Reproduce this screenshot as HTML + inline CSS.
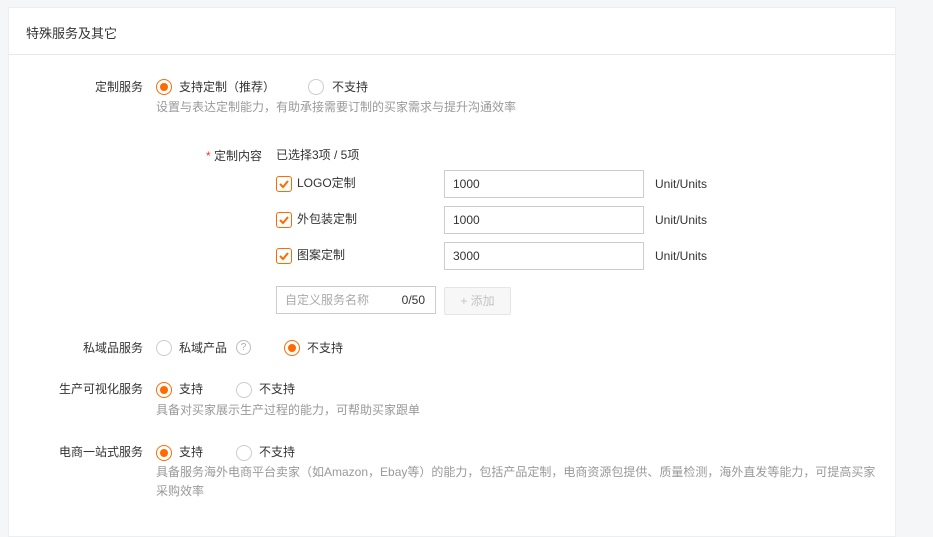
<!DOCTYPE html>
<html><head><meta charset="utf-8"><style>
*{margin:0;padding:0;box-sizing:border-box}
body{width:933px;height:524px;background:#f5f6f8;font-family:"Liberation Sans","Noto Sans CJK SC",sans-serif;font-size:12px;color:#333;position:relative;overflow:hidden}
.card{position:absolute;left:8px;top:7px;width:888px;height:530px;background:#fff;border:1px solid #eceef0}
.hd{position:absolute;left:0;top:0;width:100%;height:47px;border-bottom:1px solid #e8e8e8}
.hd span{position:absolute;left:17px;top:15px;font-size:13px;color:#333}
.a{position:absolute;white-space:nowrap;line-height:16px}
.lbl{text-align:right;width:140px;left:3px;color:#333}
.tip{color:#999}
.r{position:absolute;width:16px;height:16px;border:1px solid #ccc;border-radius:50%;background:#fff}
.r.on{border-color:#ff6a00}
.r.on::after{content:"";position:absolute;left:3px;top:3px;width:8px;height:8px;border-radius:50%;background:#ff6a00}
.cb{position:absolute;width:16px;height:16px;border:1px solid #ff6a00;border-radius:3px;background:#fff}
.cb svg{position:absolute;left:1px;top:1px}
.in{position:absolute;width:200px;height:28px;border:1px solid #ccc;padding-left:8px;line-height:26px;color:#333}
</style></head><body>
<div class="card">
<div class="hd"><span>特殊服务及其它</span></div>
</div>
<div class="a lbl" style="top:79px">定制服务</div>
<div class="r on" style="left:156px;top:79px"></div>
<div class="a" style="left:179px;top:79px">支持定制（推荐）</div>
<div class="r" style="left:308px;top:79px"></div>
<div class="a" style="left:332px;top:79px">不支持</div>
<div class="a tip" style="left:156px;top:99px">设置与表达定制能力，有助承接需要订制的买家需求与提升沟通效率</div>

<div class="a" style="left:206px;top:148px"><span style="color:#f33">*</span> 定制内容</div>
<div class="a" style="left:276px;top:147px">已选择3项 / 5项</div>

<div class="cb" style="left:276px;top:176px"><svg width="12" height="12" viewBox="0 0 12 12"><path d="M2 6l3 3 5-6" fill="none" stroke="#ff6a00" stroke-width="2"/></svg></div>
<div class="a" style="left:297px;top:175px">LOGO定制</div>
<div class="in" style="left:444px;top:170px">1000</div>
<div class="a" style="left:655px;top:176px">Unit/Units</div>

<div class="cb" style="left:276px;top:212px"><svg width="12" height="12" viewBox="0 0 12 12"><path d="M2 6l3 3 5-6" fill="none" stroke="#ff6a00" stroke-width="2"/></svg></div>
<div class="a" style="left:297px;top:211px">外包装定制</div>
<div class="in" style="left:444px;top:206px">1000</div>
<div class="a" style="left:655px;top:212px">Unit/Units</div>

<div class="cb" style="left:276px;top:248px"><svg width="12" height="12" viewBox="0 0 12 12"><path d="M2 6l3 3 5-6" fill="none" stroke="#ff6a00" stroke-width="2"/></svg></div>
<div class="a" style="left:297px;top:247px">图案定制</div>
<div class="in" style="left:444px;top:242px">3000</div>
<div class="a" style="left:655px;top:248px">Unit/Units</div>

<div class="in" style="left:276px;top:286px;width:160px;color:#aaa">自定义服务名称<span style="position:absolute;right:10px;color:#333">0/50</span></div>
<div class="a" style="left:444px;top:287px;width:67px;height:28px;border:1px solid #e5e5e5;border-radius:2px;background:#f7f7f7;color:#c4c4c4;text-align:center;line-height:26px">+ 添加</div>

<div class="a lbl" style="top:340px">私域品服务</div>
<div class="r" style="left:156px;top:340px"></div>
<div class="a" style="left:179px;top:340px">私域产品</div>
<div class="a" style="left:236px;top:340px;width:15px;height:15px;border:1px solid #bbb;border-radius:50%;color:#aaa;font-size:10px;text-align:center;line-height:13px">?</div>
<div class="r on" style="left:284px;top:340px"></div>
<div class="a" style="left:307px;top:340px">不支持</div>

<div class="a lbl" style="top:381px">生产可视化服务</div>
<div class="r on" style="left:156px;top:382px"></div>
<div class="a" style="left:179px;top:381px">支持</div>
<div class="r" style="left:236px;top:382px"></div>
<div class="a" style="left:259px;top:381px">不支持</div>
<div class="a tip" style="left:156px;top:402px">具备对买家展示生产过程的能力，可帮助买家跟单</div>

<div class="a lbl" style="top:444px">电商一站式服务</div>
<div class="r on" style="left:156px;top:445px"></div>
<div class="a" style="left:179px;top:444px">支持</div>
<div class="r" style="left:236px;top:445px"></div>
<div class="a" style="left:259px;top:444px">不支持</div>
<div class="a tip" style="left:156px;top:464px">具备服务海外电商平台卖家（如Amazon，Ebay等）的能力，包括产品定制，电商资源包提供、质量检测，海外直发等能力，可提高买家</div>
<div class="a tip" style="left:156px;top:483px">采购效率</div>
</body></html>
